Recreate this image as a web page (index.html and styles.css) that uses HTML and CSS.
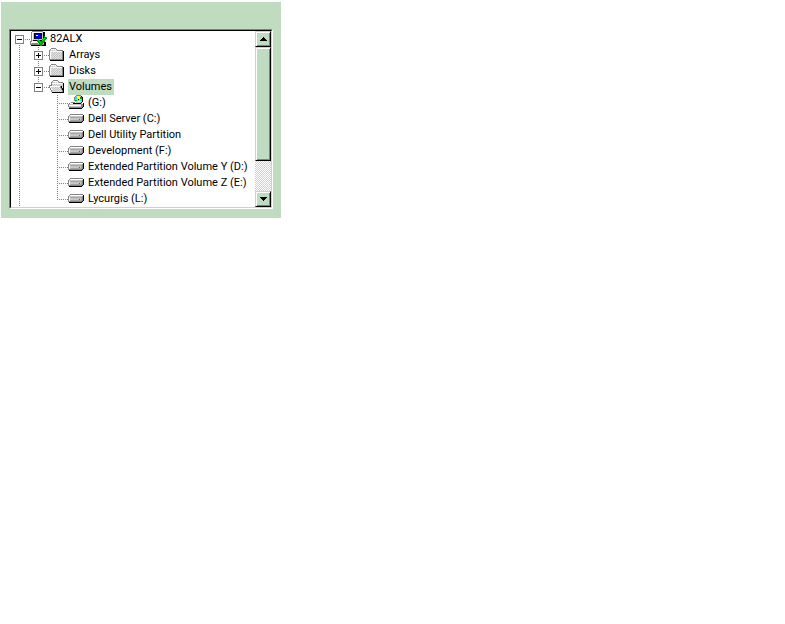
FILE: index.html
```
<!DOCTYPE html>
<html lang="en">
<head>
    <meta charset="utf-8">
    <title>Array Manager</title>
    <link rel="stylesheet" href="styles.css">
</head>
<body>
    <!-- Shared icons -->
    <svg class="defs" width="0" height="0" aria-hidden="true">
        <defs>
            <pattern id="dither" width="2" height="2" patternUnits="userSpaceOnUse">
                <path fill="#ffe763" d="M0 0h2v2h-2z"/>
                <path fill="#c6c6c6" d="M0 0h1v1h-1zM1 1h1v1h-1z"/>
            </pattern>
            <symbol id="computer" viewBox="0 0 17 16">
                <path fill="#848484" d="M2 0h11v1h-11zM1 1h1v9h-1zM0 10h2v4h-2z"/>
                <path fill="#c6c6c6" d="M2 1h11v9h-11zM1 11h13v3h-13z"/>
                <path fill="#fff" d="M2 1h10v1h-10zM2 2h1v7h-1zM1 11h12v1h-12z"/>
                <path fill="#000" d="M4 2h8v1h-8zM4 3h1v5h-1zM13 1h2v9h-2zM3 9h11v1h-11zM14 11h2v3h-2zM1 14h15v1h-15z"/>
                <path fill="#0000ff" d="M5 3h7v5h-7z"/>
                <path fill="#000084" d="M5 6h7v2h-7zM10 3h2v5h-2z"/>
                <path fill="#fff" d="M6 4h2v1h-2z"/>
                <path fill="#848484" d="M2 12h6v1h-6zM1 13h13v1h-13z"/>
                <path fill="none" stroke="#009c00" stroke-width="3" d="M8 9l3 4 5-7"/>
                <path fill="#00e700" d="M8 8h1v2h-1zM9 10h1v1h-1zM10 11h1v1h-1zM12 9h1v1h-1zM13 8h1v1h-1zM14 7h1v1h-1z"/>
            </symbol>
            <symbol id="folder" viewBox="0 0 17 16">
                <path fill="#848484" d="M2 1h5v1h-5zM1 2h1v1h-1zM7 2h1v1h-1zM0 3h1v10h-1zM8 3h6v1h-6z"/>
                <path fill="url(#dither)" d="M2 2h5v1h-5zM1 3h7v1h-7zM1 4h13v9h-13z"/>
                <path fill="#fff" d="M2 2h5v1h-5zM1 4h12v1h-12zM1 5h1v8h-1z"/>
                <path fill="#848484" d="M13 4h1v9h-1zM1 12h13v1h-13z"/>
                <path fill="#000" d="M14 4h1v10h-1zM1 13h14v1h-14z"/>
            </symbol>
            <symbol id="folder-open" viewBox="0 0 17 16">
                <path fill="#848484" d="M4 1h5v1h-5zM3 2h1v1h-1zM9 2h1v1h-1zM2 3h1v3h-1zM10 3h4v1h-4zM0 6h11v1h-11zM0 7h1v2h-1zM1 9h1v2h-1zM2 11h1v2h-1z"/>
                <path fill="url(#dither)" d="M4 2h5v1h-5zM3 3h7v1h-7zM3 4h11v9h-11zM1 7h10v2h-10zM2 9h10v2h-10z"/>
                <path fill="#fff" d="M4 2h5v1h-5zM3 4h10v1h-10zM1 7h10v1h-10zM1 8h1v1h-1zM2 9h1v2h-1z"/>
                <path fill="#848484" d="M11 7h1v2h-1zM12 9h1v2h-1zM13 11h1v2h-1z"/>
                <path fill="#000" d="M14 4h1v10h-1zM12 7h1v2h-1zM13 9h1v2h-1zM3 13h12v1h-12z"/>
            </symbol>
            <symbol id="drive" viewBox="0 0 17 16">
                <path fill="#848484" d="M2 3h13v1h-13zM1 4h1v1h-1zM0 5h1v6h-1z"/>
                <path fill="#c6c6c6" d="M2 4h12v2h-12zM1 5h13v6h-13z"/>
                <path fill="#fff" d="M2 4h12v1h-12zM1 6h1v4h-1z"/>
                <path fill="#848484" d="M14 5h1v5h-1zM1 10h13v1h-13z"/>
                <path fill="#a5a5a5" d="M2 6h11v1h-11zM2 9h12v1h-12zM13 6h1v4h-1z"/>
                <path fill="#000" d="M15 4h1v6h-1zM14 10h1v1h-1zM1 11h13v1h-13z"/>
                <path fill="#00a500" d="M11 8h1v1h-1z"/>
            </symbol>
            <symbol id="cdrom" viewBox="0 0 17 16">
                <path fill="#848484" d="M3 7h4v1h-4zM1 8h1v1h-1zM0 9h1v3h-1z"/>
                <path fill="#c6c6c6" d="M2 8h12v1h-12zM1 9h13v3h-13z"/>
                <path fill="#fff" d="M2 8h11v1h-11zM1 10h12v1h-12z"/>
                <path fill="#848484" d="M6 2h1v4h-1zM7 1h1v1h-1zM8 0h5v1h-5zM1 12h13v1h-13zM13 9h2v3h-2z"/>
                <path fill="#c6c6c6" d="M8 1h5v1h-5zM7 2h7v5h-7zM8 7h5v1h-5z"/>
                <path fill="#ffff00" d="M9 1h3v3h-3zM10 6h3v1h-3z"/>
                <path fill="#00e7e7" d="M7 2h2v2h-2zM12 5h2v1h-2z"/>
                <path fill="#00a500" d="M12 2h2v2h-2zM7 5h2v1h-2z"/>
                <path fill="#000" d="M10 4h1v1h-1zM13 1h1v1h-1zM14 2h1v5h-1zM13 7h1v1h-1zM5 8h8v1h-8zM15 8h1v4h-1zM14 12h1v1h-1zM1 13h13v1h-13z"/>
            </symbol>
        </defs>
    </svg>

    <div class="panel">
        <div class="frame">
            <ul class="tree">
                <li class="root">
                    <div class="row">
                        <button class="toggle minus" type="button" aria-label="Collapse 82ALX"></button>
                        <svg class="icon" aria-hidden="true"><use href="#computer"/></svg>
                        <span class="label">82ALX</span>
                    </div>
                    <ul>
                        <li>
                            <div class="row">
                                <button class="toggle plus" type="button" aria-label="Expand Arrays"></button>
                                <svg class="icon" aria-hidden="true"><use href="#folder"/></svg>
                                <span class="label">Arrays</span>
                            </div>
                        </li>
                        <li>
                            <div class="row">
                                <button class="toggle plus" type="button" aria-label="Expand Disks"></button>
                                <svg class="icon" aria-hidden="true"><use href="#folder"/></svg>
                                <span class="label">Disks</span>
                            </div>
                        </li>
                        <li>
                            <div class="row">
                                <button class="toggle minus" type="button" aria-label="Collapse Volumes"></button>
                                <svg class="icon" aria-hidden="true"><use href="#folder-open"/></svg>
                                <span class="label selected">Volumes</span>
                            </div>
                            <ul>
                                <li><div class="row leaf"><svg class="icon" aria-hidden="true"><use href="#cdrom"/></svg><span class="label">(G:)</span></div></li>
                                <li><div class="row leaf"><svg class="icon" aria-hidden="true"><use href="#drive"/></svg><span class="label">Dell Server (C:)</span></div></li>
                                <li><div class="row leaf"><svg class="icon" aria-hidden="true"><use href="#drive"/></svg><span class="label">Dell Utility Partition</span></div></li>
                                <li><div class="row leaf"><svg class="icon" aria-hidden="true"><use href="#drive"/></svg><span class="label">Development (F:)</span></div></li>
                                <li><div class="row leaf"><svg class="icon" aria-hidden="true"><use href="#drive"/></svg><span class="label">Extended Partition Volume Y (D:)</span></div></li>
                                <li><div class="row leaf"><svg class="icon" aria-hidden="true"><use href="#drive"/></svg><span class="label">Extended Partition Volume Z (E:)</span></div></li>
                                <li><div class="row leaf"><svg class="icon" aria-hidden="true"><use href="#drive"/></svg><span class="label">Lycurgis (L:)</span></div></li>
                            </ul>
                        </li>
                    </ul>
                </li>
            </ul>
            <div class="scrollbar">
                <button class="arrow" type="button" aria-label="Scroll up">
                    <svg width="7" height="4" aria-hidden="true"><path d="M3 0h1v1h1v1h1v1h1v1h-7v-1h1v-1h1v-1h1z"/></svg>
                </button>
                <div class="thumb"></div>
                <div class="track"></div>
                <button class="arrow" type="button" aria-label="Scroll down">
                    <svg width="7" height="4" aria-hidden="true"><path d="M0 0h7v1h-1v1h-1v1h-1v1h-1v-1h-1v-1h-1v-1h-1z"/></svg>
                </button>
            </div>
        </div>
    </div>
</body>
</html>
```
FILE: styles.css
```
body { margin: 2px 1px; background: #fff; color: #000; font: 11px/16px Roboto, Tahoma, sans-serif; }
ul { list-style: none; margin: 0; padding: 0; }
button { margin: 0; padding: 0; cursor: pointer; }
svg { display: block; shape-rendering: crispEdges; }
.defs { position: absolute; }

.panel { box-sizing: border-box; max-width: 280px; padding: 27px 8px 9px; background: #c0dcc0; }
.frame { display: flex; border: 1px solid; border-color: #808080 #fff #fff #808080; }

/* Tree */
.tree { flex: 1; min-width: 0; overflow: hidden; background: #fff; border: 1px solid #000; border-width: 1px 0 0 1px; border-bottom: 1px solid #c0dcc0; }
.tree ul { padding-left: 19px; }
.tree li { background: repeating-linear-gradient(#808080 0 1px, transparent 1px 2px) 8px 0 / 1px 100% no-repeat; }
.tree li:last-child { background-size: 1px 9px; }
.tree .root:last-child { background-position: 8px 8px; background-size: 1px 100%; }
.row { display: flex; align-items: center; height: 16px; white-space: nowrap; background: repeating-linear-gradient(90deg, #808080 0 1px, transparent 1px 2px) 8px 8px / 11px 1px no-repeat; }
.leaf { padding-left: 19px; }
.toggle { flex: none; width: 9px; height: 9px; margin: 1px 6px 0 4px; border: 1px solid #808080; border-radius: 0; background: linear-gradient(#000, #000) center / 5px 1px no-repeat #fff; }
.plus { background: linear-gradient(#000, #000) center / 5px 1px no-repeat, linear-gradient(#000, #000) center / 1px 5px no-repeat #fff; }
.icon { flex: none; width: 17px; height: 16px; margin-right: 2px; }
.label { padding: 0 2px 0 1px; }
.selected { background: #c0dcc0; }

/* Scrollbar */
.scrollbar { display: flex; flex-direction: column; width: 16px; border: 1px solid #c0dcc0; border-width: 1px 1px 1px 0; border-top-color: #000; }
.arrow, .thumb { box-sizing: border-box; background: #c0dcc0; border: 1px solid; border-color: #c0dcc0 #000 #000 #c0dcc0; border-radius: 0; box-shadow: inset 1px 1px #fff, inset -1px -1px #808080; }
.arrow { display: flex; align-items: center; justify-content: center; height: 16px; }
.thumb { flex: 11; }
.track { flex: 3; background: repeating-conic-gradient(#c0dcc0 0 25%, #fff 0 50%) 0 0 / 2px 2px; }
```
